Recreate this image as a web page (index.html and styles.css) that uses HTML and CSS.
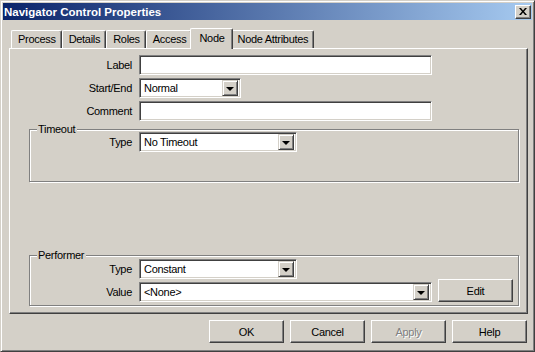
FILE: index.html
```html
<!DOCTYPE html>
<html>
<head>
<meta charset="utf-8">
<link rel="stylesheet" href="styles.css">
</head>
<body>
<div class="window">
  <div class="titlebar">
    <span class="title">Navigator Control Properties</span>
    <span class="close"><svg width="8" height="7" viewBox="0 0 8 7"><path d="M0 0h2l2 2.5L6 0h2L5 3.5 8 7H6L4 4.5 2 7H0l3-3.5z" fill="#000"/></svg></span>
  </div>
  <div class="body">
    <div class="tabs">
      <div class="tab">Process</div>
      <div class="tab">Details</div>
      <div class="tab">Roles</div>
      <div class="tab">Access</div>
      <div class="tab active">Node</div>
      <div class="tab">Node Attributes</div>
    </div>
    <div class="panel">
      <div class="form">
        <label class="lbl">Label</label>
        <div class="field wide"></div>
        <label class="lbl">Start/End</label>
        <div class="field combo short"><span class="val">Normal</span><span class="drop"><i></i></span></div>
        <label class="lbl">Comment</label>
        <div class="field wide"></div>
      </div>
      <div class="group timeout">
        <span class="legend">Timeout</span>
        <div class="form inner">
          <label class="lbl">Type</label>
          <div class="field combo mid"><span class="val">No Timeout</span><span class="drop"><i></i></span></div>
        </div>
      </div>
      <div class="group performer">
        <span class="legend">Performer</span>
        <div class="form inner">
          <label class="lbl">Type</label>
          <div class="field combo mid"><span class="val">Constant</span><span class="drop"><i></i></span></div>
          <label class="lbl">Value</label>
          <div class="valrow">
            <div class="field combo wide"><span class="val">&lt;None&gt;</span><span class="drop"><i></i></span></div>
            <button class="btn edit">Edit</button>
          </div>
        </div>
      </div>
    </div>
    <div class="buttons">
      <button class="btn">OK</button>
      <button class="btn">Cancel</button>
      <button class="btn disabled">Apply</button>
      <button class="btn">Help</button>
    </div>
  </div>
</div>
</body>
</html>
```
FILE: styles.css
```css
* { box-sizing: border-box; }
html, body { margin: 0; padding: 0; background: #d4d0c8; }
body {
  font-family: "Liberation Sans", Arial, sans-serif;
  font-size: 11px;
  letter-spacing: -0.3px;
  color: #000;
}
.window {
  width: 535px;
  height: 352px;
  background: #d4d0c8;
  border: 1px solid;
  border-color: #d4d0c8 #404040 #404040 #d4d0c8;
  box-shadow: inset 1px 1px #fff, inset -1px -1px #808080;
  padding: 2px;
  display: flex;
  flex-direction: column;
}
.titlebar {
  height: 17px;
  flex: none;
  background: linear-gradient(to right, #0a246a, #a6caf0);
  display: flex;
  align-items: center;
  justify-content: space-between;
  padding: 0 1px 0 1px;
}
.title {
  color: #fff;
  font-weight: bold;
  font-size: 11.5px;
  letter-spacing: 0;
}
.close {
  width: 16px;
  height: 14px;
  background: #d4d0c8;
  border: 1px solid;
  border-color: #fff #404040 #404040 #fff;
  box-shadow: inset -1px -1px #808080;
  display: flex;
  align-items: center;
  justify-content: center;
  padding: 0 1px 1px 0;
}
.close svg { display: block; }
.body {
  flex: 1;
  display: flex;
  flex-direction: column;
  padding: 8px 4px 0 6px;
}
.tabs {
  height: 20px;
  display: flex;
  align-items: flex-end;
  padding-left: 2px;
}
.tab {
  height: 18px;
  padding: 0 5px 1px 6px;
  display: flex;
  align-items: center;
  border: 1px solid;
  border-bottom: none;
  border-color: #fff #404040 #404040 #fff;
  box-shadow: inset -1px 0 #808080;
  border-radius: 2px 2px 0 0;
  background: #d4d0c8;
  white-space: nowrap;
}
.tab.active {
  height: 21px;
  margin: 0 -2px -1px -2px;
  padding: 0 7px 3px 8px;
  position: relative;
  z-index: 1;
}
.panel {
  height: 266px;
  flex: none;
  border: 1px solid;
  border-color: #fff #404040 #404040 #fff;
  box-shadow: inset -1px -1px #808080;
  display: flex;
  flex-direction: column;
  padding: 6px 8px 7px 19px;
}
.form {
  display: grid;
  grid-template-columns: 103px auto;
  column-gap: 7px;
  row-gap: 3px;
  justify-items: start;
  align-items: center;
}
.lbl { justify-self: end; }
.form.inner { grid-template-columns: 102px auto; }
.field {
  height: 20px;
  background: #fff;
  border: 1px solid;
  border-color: #808080 #fff #fff #808080;
  box-shadow: inset 1px 1px #404040, inset -1px -1px #d4d0c8;
  display: flex;
  align-items: center;
  padding: 2px 2px 2px 4px;
}
.field.wide { width: 293px; }
.field.short { width: 102px; }
.field.mid { width: 158px; }
.val { flex: 1; }
.drop {
  width: 16px;
  height: 16px;
  background: #d4d0c8;
  border: 1px solid;
  border-color: #d4d0c8 #404040 #404040 #d4d0c8;
  box-shadow: inset 1px 1px #fff, inset -1px -1px #808080;
  display: flex;
  align-items: center;
  justify-content: center;
}
.drop i {
  width: 0;
  height: 0;
  border-left: 4px solid transparent;
  border-right: 4px solid transparent;
  border-top: 4px solid #000;
  margin-top: 1px;
}
.group {
  position: relative;
  border: 1px solid #808080;
  box-shadow: inset 1px 1px #fff, 1px 1px #fff;
  width: 490px;
  padding: 2px 0 0 0;
}
.timeout {
  margin-top: 8px;
  height: 53px;
}
.performer {
  margin-top: auto;
  height: 51px;
  padding-top: 3px;
}
.legend {
  position: absolute;
  top: -7px;
  left: 7px;
  background: #d4d0c8;
  padding: 0 2px 0 1px;
  line-height: 13px;
}
.valrow {
  display: flex;
  align-items: flex-end;
  gap: 6px;
  height: 20px;
}
.btn {
  width: 75px;
  height: 23px;
  font: inherit;
  letter-spacing: inherit;
  color: #000;
  background: #d4d0c8;
  border: 1px solid;
  border-color: #fff #404040 #404040 #fff;
  box-shadow: inset -1px -1px #808080;
  padding: 0;
  flex: none;
}
.btn.disabled {
  color: #808080;
  text-shadow: 1px 1px #fff;
}
.buttons {
  display: flex;
  justify-content: flex-end;
  gap: 6px;
  margin-top: 6px;
  padding-right: 1px;
}
```
